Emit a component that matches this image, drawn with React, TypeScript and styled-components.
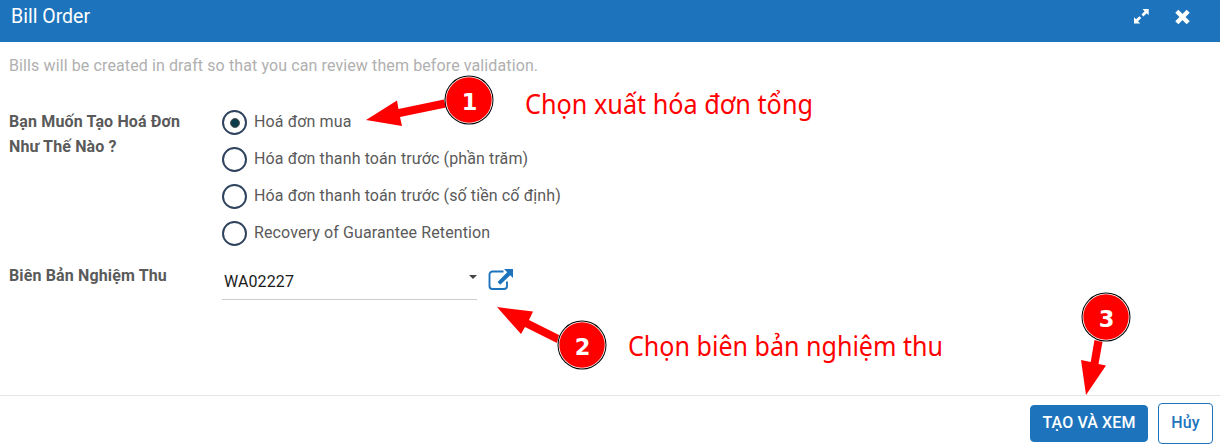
import React from "react";
import styled, { createGlobalStyle } from "styled-components";

const blue = "#1d74bd";

const GlobalStyle = createGlobalStyle`
  *, *::after { box-sizing: border-box; }
  body { margin: 0; background: #fff; font-family: Roboto, sans-serif; font-size: 16px; color: #5a5a5a; }
`;

const Dialog = styled.div`
  position: relative;
  display: flex;
  flex-direction: column;
  width: 1220px;
  height: 446px;
  overflow: hidden;
`;

const Header = styled.header`
  display: flex;
  justify-content: space-between;
  height: 42px;
  padding: 4px 30px 0 11px;
  background: ${blue};
  color: #fff;
`;

const Title = styled.h1`
  margin: 0;
  font-size: 19.5px;
  font-weight: 400;
  line-height: 26px;
`;

const HeaderActions = styled.div`
  display: flex;
  gap: 25px;
  padding-top: 5px;
`;

const Body = styled.main`
  flex: 1;
  padding: 12px 9px 0;
  letter-spacing: 0.11px;
`;

const Hint = styled.p`
  margin: 0 0 32px;
  color: #b0b0b0;
  line-height: 24px;
`;

const Field = styled.div<{ $gap?: number }>`
  display: grid;
  grid-template-columns: 213px auto;
  align-items: start;
  margin-bottom: ${(p) => p.$gap ?? 0}px;
`;

const Label = styled.label<{ $raised?: boolean }>`
  width: 190px;
  margin-top: ${(p) => (p.$raised ? -1 : 0)}px;
  font-weight: 700;
  line-height: 25px;
  letter-spacing: 0.14px;
`;

const Options = styled.div`
  display: flex;
  flex-direction: column;
  gap: 12px;
`;

const Option = styled.label`
  display: flex;
  gap: 7px;
  height: 25px;
  line-height: 23px;
`;

const Radio = styled.span<{ $checked?: boolean }>`
  display: flex;
  align-items: center;
  justify-content: center;
  width: 25px;
  height: 25px;
  border: 2px solid #2f435e;
  border-radius: 50%;
  &::after {
    content: "";
    width: 10px;
    height: 10px;
    border: 1.5px solid #555;
    border-radius: 50%;
    background: #0c3c4c;
    visibility: ${(p) => (p.$checked ? "visible" : "hidden")};
  }
`;

const SelectRow = styled.div`
  display: flex;
  gap: 11px;
  padding-top: 2px;
`;

const Select = styled.div`
  display: flex;
  justify-content: space-between;
  width: 255px;
  height: 35px;
  padding: 4px 0 0 2px;
  border-bottom: 1px solid #ccc;
  color: #1b1b1b;
  line-height: 25px;
`;

const Caret = styled.span`
  width: 0;
  height: 0;
  margin-top: 6px;
  border: 4px solid transparent;
  border-top-color: #444;
  border-bottom: 0;
`;

const LinkIcon = styled.svg`
  margin-top: 3px;
`;

const Footer = styled.footer`
  display: flex;
  justify-content: flex-end;
  align-items: flex-start;
  gap: 10px;
  height: 51px;
  padding: 7px 7px 0 0;
  border-top: 1px solid #e5e5e5;
`;

const Button = styled.button<{ $primary?: boolean }>`
  width: ${(p) => (p.$primary ? 118 : 55)}px;
  height: ${(p) => (p.$primary ? 37 : 41)}px;
  margin-top: ${(p) => (p.$primary ? 2 : 0)}px;
  padding: 0 0 2px;
  border: 1px solid ${blue};
  border-radius: 4px;
  background: ${(p) => (p.$primary ? blue : "#fff")};
  color: ${(p) => (p.$primary ? "#fff" : blue)};
  font: 500 16px Roboto, sans-serif;
  letter-spacing: 0.12px;
`;

const Overlay = styled.svg`
  position: absolute;
  inset: 0;
  pointer-events: none;
`;

const steps = [
  { n: 1, x: 469, y: 100, arrow: "366,120 397,100.5 398.5,109 444,99.5 446,107.5 400,117 402,126" },
  { n: 2, x: 582, y: 345, arrow: "497,307 533,311.5 529,320 559,335 557,343 525,327 521,334" },
  { n: 3, x: 1106, y: 317, arrow: "1086,395 1081,360 1090.7,362 1094.5,340 1102.5,342 1098.5,364 1106,365.5" },
];

const notes = [
  { text: "Chọn xuất hóa đơn tổng", x: 525, y: 114, width: 288 },
  { text: "Chọn biên bản nghiệm thu", x: 628, y: 356, width: 315 },
];

const options = [
  "Hoá đơn mua",
  "Hóa đơn thanh toán trước (phần trăm)",
  "Hóa đơn thanh toán trước (số tiền cố định)",
  "Recovery of Guarantee Retention",
];

export default function App() {
  return (
    <>
      <GlobalStyle />
      <Dialog>
        <Header>
          <Title>Bill Order</Title>
          <HeaderActions>
            <svg width="17" height="16" viewBox="0 0 17 16" fill="#fff">
              <path d="M9.500 0H15.700v6.200l-2-1.900-3.300 3.100-1.900-1.800L11.600 2.200zM1 8.300l2.100 2 3.300-3.100 1.900 1.800-3.300 3.200L7.200 14.500H1z" />
            </svg>
            <svg width="15" height="16" viewBox="0 0 15 16" stroke="#fff" strokeWidth="4.400" strokeLinecap="butt">
              <path d="M1.800 2.300l11.400 11.400M13.200 2.300L1.800 13.700" />
            </svg>
          </HeaderActions>
        </Header>
        <Body>
          <Hint>Bills will be created in draft so that you can review them before validation.</Hint>
          <Field $gap={17}>
            <Label $raised>Bạn Muốn Tạo Hoá Đơn Như Thế Nào ?</Label>
            <Options>
              {options.map((text, i) => (
                <Option key={text}>
                  <Radio $checked={i === 0} />
                  {text}
                </Option>
              ))}
            </Options>
          </Field>
          <Field>
            <Label>Biên Bản Nghiệm Thu</Label>
            <SelectRow>
              <Select>
                WA02227
                <Caret />
              </Select>
              <LinkIcon width="26" height="24" viewBox="0 0 26 24" fill="none">
                <path d="M15.500 3.500H4.500a3 3 0 0 0-3 3v11.500a3 3 0 0 0 3 3H16a3 3 0 0 0 3-3V13.500" stroke={blue} strokeWidth="1.900" />
                <path d="M16 1h9v9l-2.800-2.800-10 9.500-2.600-2.600L19.200 4.200z" fill={blue} />
              </LinkIcon>
            </SelectRow>
          </Field>
        </Body>
        <Footer>
          <Button $primary>TẠO VÀ XEM</Button>
          <Button>Hủy</Button>
        </Footer>
        <Overlay width="1220" height="446">
          {steps.map((s) => (
            <g key={s.n}>
              <polygon points={s.arrow} fill="#f00" />
              <circle cx={s.x} cy={s.y} r="24.500" fill="#000" />
              <circle cx={s.x} cy={s.y} r="23.500" fill="#fff" />
              <circle cx={s.x} cy={s.y} r="22.700" fill="#f00" />
              <text x={s.x + 0.5} y={s.y + 9.500} textAnchor="middle" fill="#fff" fontFamily="DejaVu Sans, sans-serif" fontWeight="700" fontSize="22.500">
                {s.n}
              </text>
            </g>
          ))}
          {notes.map((t) => (
            <text key={t.text} x={t.x} y={t.y} textLength={t.width} lengthAdjust="spacingAndGlyphs" fill="#f00" fontFamily="Noto Sans, sans-serif" fontSize="26.700">
              {t.text}
            </text>
          ))}
        </Overlay>
      </Dialog>
    </>
  );
}
